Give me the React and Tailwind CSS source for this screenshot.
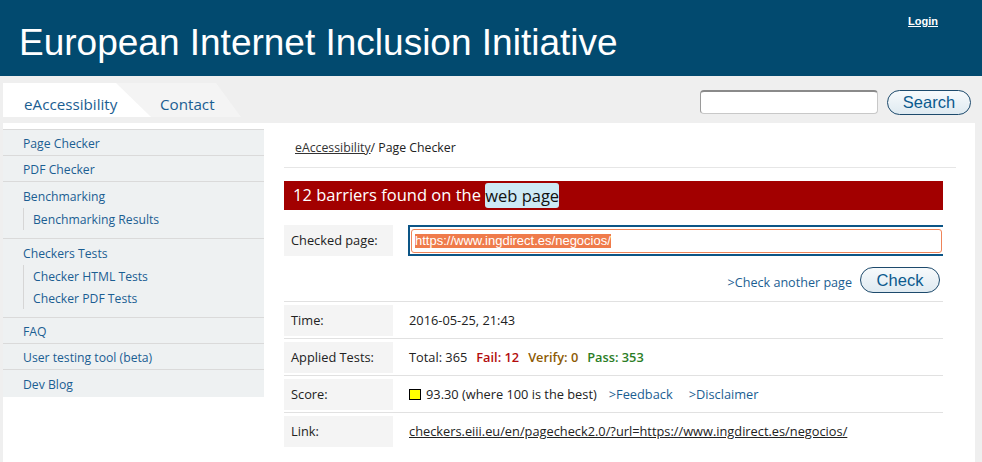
import React from "react";

const sideLink = "text-[12.2px] leading-[18px] text-[#1b5e92]";

const SideItem = ({ label, last }) => (
  <li className={"border-t border-[#dadada] pl-[20px] flex items-center pt-[2px] " + (last ? "h-[28px]" : "h-[26px]")}>
    <a href="#" className={sideLink}>{label}</a>
  </li>
);

const SideGroup = ({ label, subs }) => (
  <li className="border-t border-[#dadada] pl-[20px] pt-[6px] pb-[8px]">
    <a href="#" className={sideLink + " block"}>{label}</a>
    <ul className="mt-[2px] border-l border-[#d6d6d6] pl-[9px]">
      {subs.map((s) => (
        <li key={s} className="h-[22px] flex items-center pt-[1px]">
          <a href="#" className={sideLink}>{s}</a>
        </li>
      ))}
    </ul>
  </li>
);

const Row = ({ label, children }) => (
  <div className="border-t border-[#e1e1e1] flex items-center pt-[3px] pb-[2px]">
    <div className="w-[109px] h-[31px] bg-[#f4f4f4] flex items-center pl-[7px] text-[12.8px] text-[#222]">{label}</div>
    <div className="pl-[16px] text-[12.8px] text-[#222] flex items-center">{children}</div>
  </div>
);

const App = () => {
  return (
    <div className="min-h-[462px] bg-[#efefef] font-['Open_Sans',sans-serif]">
      {/* header */}
      <header className="h-[76px] bg-[#024a6f] flex justify-between items-start">
        <h1 className="pl-[19px] pt-[24px] text-[37px] leading-none text-white font-['Liberation_Sans',Arial,sans-serif]">
          European Internet Inclusion Initiative
        </h1>
        <a href="#" className="mt-[13px] mr-[44px] text-[11px] font-bold text-white underline font-['Liberation_Sans',Arial,sans-serif]">
          Login
        </a>
      </header>

      {/* nav */}
      <nav className="h-[47px] flex justify-between items-start">
        <div className="flex pt-[7px] pl-[3px]">
          <a href="#" className="relative z-10 w-[148px] h-[34px] bg-white pl-[21px] pt-[10px] text-[15.2px] leading-[22px] text-[#1b5e92] [clip-path:polygon(0_0,113px_0,100%_100%,0_100%)]">
            eAccessibility
          </a>
          <a href="#" className="-ml-[35px] w-[125px] h-[34px] bg-[#f4f4f4] pl-[44px] pt-[10px] text-[15.2px] leading-[22px] text-[#1b5e92] [clip-path:polygon(0_0,100px_0,100%_100%,0_100%)]">
            Contact
          </a>
        </div>
        <form className="flex items-start pt-[14px] pr-[11px] gap-[9px]" onSubmit={(e) => e.preventDefault()}>
          <input className="w-[178px] h-[24px] bg-white rounded-[4px] border border-[#c8c8c8] border-t-[#8a8a8a] border-l-[#9a9a9a] border-t-2" />
          <button className="w-[84px] h-[25px] rounded-full border border-[#1d4a6c] bg-gradient-to-b from-[#f7fafc] to-[#dfeaf1] text-[16.5px] leading-none text-[#0b5a8e] font-['Liberation_Sans',Arial,sans-serif]">
            Search
          </button>
        </form>
      </nav>

      {/* body */}
      <div className="ml-[3px] mr-[7px] min-h-[339px] bg-white flex items-start">
        <aside className="w-[261px] pt-[6px]">
          <ul className="bg-[#eef1f2]">
            <SideItem label="Page Checker" />
            <SideItem label="PDF Checker" />
            <SideGroup label="Benchmarking" subs={["Benchmarking Results"]} />
            <SideGroup label="Checkers Tests" subs={["Checker HTML Tests", "Checker PDF Tests"]} />
            <SideItem label="FAQ" />
            <SideItem label="User testing tool (beta)" />
            <SideItem label="Dev Blog" last />
          </ul>
        </aside>

        <main className="flex-1 pl-[20px] pr-[19px]">
          <div className="pt-[16px] pb-[10px] pl-[11px] border-b border-[#e6e6e6] text-[12.3px] leading-[18px] text-[#222]">
            <a href="#" className="underline text-[#333]">eAccessibility</a>/ Page Checker
          </div>

          <div className="w-[659px]">
            <h2 className="mt-[13px] h-[29px] bg-[#a20000] flex items-center pl-[9px] text-[16.5px] text-white">
              12 barriers found on the&nbsp;
              <span className="bg-[#cde9f5] text-[#111] rounded-[3px] leading-[25px]">web page</span>
            </h2>

            <div className="mt-[15px] flex items-center">
              <div className="w-[109px] h-[31px] bg-[#f4f4f4] flex items-center pl-[7px] text-[12.8px] text-[#222]">Checked page:</div>
              <div className="ml-[15px] flex-1 h-[31px] border-2 border-r-0 border-[#0c5586] p-[1px] bg-white">
                <div className="h-[24px] mt-[1px] border border-[#ef8459] rounded-[3px] flex items-center pl-[3px] font-['Liberation_Sans',Arial,sans-serif] text-[13px]">
                  <span className="bg-[#ef7b4b] text-white leading-[14px]">https://www.ingdirect.es/negocios/</span>
                </div>
              </div>
            </div>

            <div className="mt-[11px] mb-[8px] flex justify-end items-center gap-[8px] pr-[3px]">
              <a href="#" className="text-[12.6px] text-[#1b5e92] mt-[6px]">&gt;Check another page</a>
              <button className="w-[80px] h-[26px] rounded-full border border-[#1d4a6c] bg-gradient-to-b from-[#f7fafc] to-[#dfeaf1] text-[16.5px] leading-none text-[#0b5a8e] font-['Liberation_Sans',Arial,sans-serif]">
                Check
              </button>
            </div>

            <Row label="Time:">2016-05-25, 21:43</Row>
            <Row label="Applied Tests:">
              <span className="flex gap-[9px]">
                <span>Total: 365</span>
                <span className="font-semibold text-[#b30c0c]">Fail: 12</span>
                <span className="font-semibold text-[#8c5a04]">Verify: 0</span>
                <span className="font-semibold text-[#2b7d25]">Pass: 353</span>
              </span>
            </Row>
            <Row label="Score:">
              <span className="w-[12px] h-[11px] bg-[#ffff00] border border-black mr-[5px]"></span>
              <span>93.30 (where 100 is the best)</span>
              <a href="#" className="ml-[12px] text-[#1b5e92]">&gt;Feedback</a>
              <a href="#" className="ml-[16px] text-[#1b5e92]">&gt;Disclaimer</a>
            </Row>
            <Row label="Link:">
              <a href="#" className="underline text-[#222]">checkers.eiii.eu/en/pagecheck2.0/?url=https://www.ingdirect.es/negocios/</a>
            </Row>
          </div>
        </main>
      </div>
    </div>
  );
};

export default App;
